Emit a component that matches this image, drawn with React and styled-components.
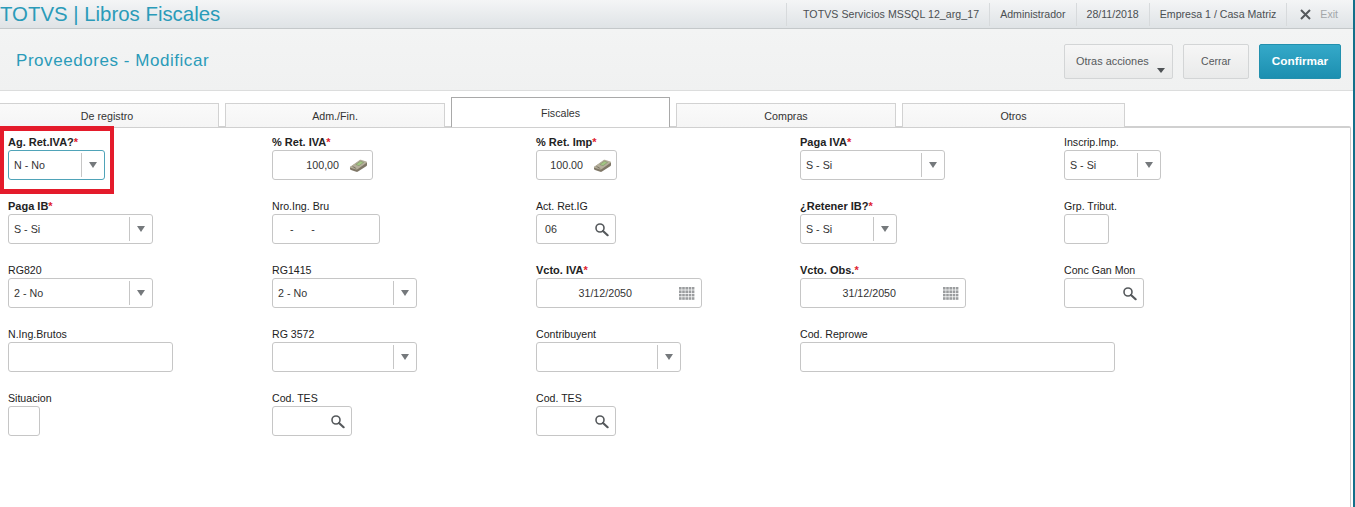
import React from 'react';
import styled, { createGlobalStyle } from 'styled-components';

const Global = createGlobalStyle`
  html, body { margin: 0; padding: 0; background: #fff; }
  body { font-family: "Liberation Sans", Arial, sans-serif; }
`;

const Page = styled.div`
  position: relative;
  width: 1355px;
  height: 507px;
  overflow: hidden;
  box-sizing: border-box;
  border-right: 2px solid #13708a;
  display: flex;
  flex-direction: column;
  background: #fff;
`;

const TopBar = styled.header`
  height: 28px;
  flex: none;
  display: flex;
  align-items: center;
  justify-content: space-between;
  background: linear-gradient(#f4f5f6, #dfe3e6);
  border-bottom: 1px solid #c4c8ca;
`;

const Brand = styled.div`
  font-size: 20.4px;
  color: #2a9bb9;
  white-space: nowrap;
`;

const Session = styled.div`
  display: flex;
  height: 100%;
  align-items: center;
  margin-right: 2px;
`;

const SessionItem = styled.div`
  display: flex;
  align-items: center;
  gap: 9px;
  height: 23px;
  padding: 0 ${p => p.$pad || 10}px 0 ${p => p.$padLeft || p.$pad || 10}px;
  border-left: 1px solid #d7dadc;
  font-size: 10.6px;
  letter-spacing: ${p => p.$ls || 0}px;
  color: ${p => p.$muted ? '#a3a7a9' : '#4b4f52'};
  white-space: nowrap;
`;

const SubBar = styled.div`
  height: 62px;
  flex: none;
  display: flex;
  align-items: center;
  justify-content: space-between;
  box-sizing: border-box;
  padding: 0 12px 0 16px;
  background: linear-gradient(#f3f4f4, #f0f1f1);
  border-bottom: 1px solid #dcdddd;
`;

const Title = styled.h1`
  margin: 2px 0 0;
  font-size: 17px;
  font-weight: 400;
  letter-spacing: 0.55px;
  color: #2a9bb9;
`;

const Actions = styled.div`
  display: flex;
  align-items: center;
  gap: 10px;
  padding-top: 3px;
`;

const Button = styled.button`
  position: relative;
  width: ${p => p.$w}px;
  height: 35px;
  box-sizing: border-box;
  font-family: inherit;
  border-radius: 2px;
  border: 1px solid ${p => p.$primary ? '#2290ae' : '#d3d5d6'};
  background: ${p => p.$primary ? 'linear-gradient(#35a9c9, #1c8fb0)' : 'linear-gradient(#f6f6f6, #e9eaea)'};
  color: ${p => p.$primary ? '#fff' : '#55595b'};
  font-weight: ${p => p.$primary ? 700 : 400};
  font-size: ${p => p.$primary ? 11.8 : p.$left ? 10.9 : 10.5}px;
  text-align: ${p => p.$left ? 'left' : 'center'};
  padding: 0 0 0 ${p => p.$left ? 11 : 0}px;
`;

const Caret = styled.span`
  position: absolute;
  right: 7px;
  bottom: 5px;
  border-left: 4.5px solid transparent;
  border-right: 4.5px solid transparent;
  border-top: 5px solid #4e5255;
`;

const Tabs = styled.nav`
  display: flex;
  align-items: flex-end;
  gap: 6px;
  height: 36px;
  flex: none;
  margin-left: -5px;
  position: relative;
  z-index: 1;
`;

const Tab = styled.div`
  width: ${p => p.$w}px;
  height: ${p => p.$active ? 30 : 24}px;
  box-sizing: border-box;
  display: flex;
  align-items: center;
  justify-content: center;
  font-size: 10.7px;
  color: #333;
  background: ${p => p.$active ? '#fff' : 'linear-gradient(#fafafa, #f5f5f5)'};
  border: 1px solid ${p => p.$active ? '#a9a9a9' : '#d2d2d2'};
  border-bottom: 0;
`;

const Panel = styled.main`
  flex: 1;
  margin: -1px 2px 0 -2px;
  border: 1px solid #c9c9c9;
  border-top-width: 2px;
  border-top-color: #d0d0d0;
  border-bottom: 0;
  border-radius: 2px 2px 0 0;
  box-sizing: border-box;
  padding: 7px 0 0 9px;
  display: grid;
  grid-template-columns: repeat(5, 264px);
  grid-auto-rows: 64px;
  align-content: start;
`;

const Cell = styled.div`
  display: flex;
  flex-direction: column;
  align-items: flex-start;
`;

const Label = styled.label`
  height: 15px;
  line-height: 15px;
  font-size: ${p => p.$req ? 11 : 10.6}px;
  font-weight: ${p => p.$req ? 700 : 400};
  color: #222;
  white-space: nowrap;
  em { font-style: normal; color: #e0222f; }
`;

const Box = styled.div`
  width: ${p => p.$w}px;
  height: 30px;
  box-sizing: border-box;
  display: flex;
  align-items: center;
  border: 1px solid ${p => p.$focus ? '#4fa3b8' : '#c6c6c6'};
  border-radius: 3px;
  background: #fff;
  font-size: 10.7px;
  color: #333;
`;

const Value = styled.span`
  flex: 1;
  padding-left: 5px;
  padding-right: ${p => p.$right || 0}px;
  text-align: ${p => p.$align || 'left'};
  white-space: pre;
`;

const ArrowZone = styled.span`
  width: 22px;
  height: 24px;
  flex: none;
  border-left: 1px solid #c6c6c6;
  display: flex;
  align-items: center;
  justify-content: center;
  &::after {
    content: '';
    border-left: 4.5px solid transparent;
    border-right: 4.5px solid transparent;
    border-top: 6px solid #75797c;
  }
`;

const IconSlot = styled.span`
  display: flex;
  flex: none;
  margin-right: ${p => p.$mr || 6}px;
`;

const Highlight = styled.div`
  position: absolute;
  left: 0;
  top: 126px;
  width: 114px;
  height: 68px;
  box-sizing: border-box;
  border: solid #e41b2b;
  border-width: 5px 4px;
  pointer-events: none;
  z-index: 2;
`;

const SearchIcon = () => (
  <svg width="15" height="15" viewBox="0 0 15 15" fill="none">
    <circle cx="6" cy="6" r="4" stroke="#55595c" strokeWidth="1.6" />
    <path d="M9 9l4.6 4.2" stroke="#55595c" strokeWidth="2.2" strokeLinecap="round" />
  </svg>
);

const MoneyIcon = () => (
  <svg width="19" height="15" viewBox="0 0 19 15">
    <path d="M1 9L11 2.5l7 2v2.5c0 .6-.3 1-.8 1.3L9 13.6c-.6.4-1.2.4-1.8.2L2 12c-.7-.2-1-.7-1-1.3z" fill="#7f7767" />
    <path d="M1 9l9.6-7c.4-.3.9-.4 1.3-.2L17.400 3.600c.6.2.7.7.2 1.100L8.500 11.300c-.5.300-1 .400-1.500.200L1.300 9.800C.8 9.600.700 9.300 1 9z" fill="#b5af9b" />
    <path d="M6.800 6.500l4.600-3.300 3.200 1.100-4.600 3.400z" fill="#a3c684" stroke="#6d7f58" strokeWidth=".4" />
    <path d="M3.500 8.600l2.300.9M5.200 9.600l2 .8" stroke="#6f6a5a" strokeWidth=".8" />
  </svg>
);

const CalendarIcon = () => (
  <svg width="16" height="13" viewBox="0 0 16 13" fill="#9b9d9f">
    {[0, 3.4, 6.8, 10.2].flatMap(y =>
      [0, 3.2, 6.4, 9.6, 12.8].map(x => (
        <rect key={`${x}-${y}`} x={x} y={y} width="2.6" height="2.6" />
      ))
    )}
  </svg>
);

const CloseIcon = () => (
  <svg width="11" height="11" viewBox="0 0 11 11">
    <path d="M1 1l9 9M10 1l-9 9" stroke="#55595c" strokeWidth="2" />
  </svg>
);

const Select = ({ w, value, focus }) => (
  <Box $w={w} $focus={focus}>
    <Value>{value}</Value>
    <ArrowZone />
  </Box>
);

const Search = ({ w, value }) => (
  <Box $w={w}>
    <Value>{value}</Value>
    <IconSlot $mr={6}><SearchIcon /></IconSlot>
  </Box>
);

const Money = ({ w, value }) => (
  <Box $w={w}>
    <Value $align="right" $right={10}>{value}</Value>
    <IconSlot $mr={4}><MoneyIcon /></IconSlot>
  </Box>
);

const DateField = ({ w, value }) => (
  <Box $w={w}>
    <Value $align="right" $right={47}>{value}</Value>
    <IconSlot $mr={6}><CalendarIcon /></IconSlot>
  </Box>
);

const Field = ({ label, req, children }) => (
  <Cell>
    <Label $req={req}>{label}{req && <em>*</em>}</Label>
    {children}
  </Cell>
);

export default function App() {
  return (
    <>
      <Global />
      <Page>
        <TopBar>
          <Brand>TOTVS | Libros Fiscales</Brand>
          <Session>
            <SessionItem $padLeft={16} $ls={0.06}>TOTVS Servicios MSSQL 12_arg_17</SessionItem>
            <SessionItem>Administrador</SessionItem>
            <SessionItem>28/11/2018</SessionItem>
            <SessionItem>Empresa 1 / Casa Matriz</SessionItem>
            <SessionItem $muted $pad={13}><CloseIcon />Exit</SessionItem>
          </Session>
        </TopBar>
        <SubBar>
          <Title>Proveedores - Modificar</Title>
          <Actions>
            <Button $w={109} $left>Otras acciones<Caret /></Button>
            <Button $w={66}>Cerrar</Button>
            <Button $w={82} $primary>Confirmar</Button>
          </Actions>
        </SubBar>
        <Tabs>
          <Tab $w={224}>De registro</Tab>
          <Tab $w={220}>Adm./Fin.</Tab>
          <Tab $w={219} $active>Fiscales</Tab>
          <Tab $w={220}>Compras</Tab>
          <Tab $w={223}>Otros</Tab>
        </Tabs>
        <Panel>
          <Field label="Ag. Ret.IVA?" req><Select w={97} value="N - No" focus /></Field>
          <Field label="% Ret. IVA" req><Money w={101} value="100,00" /></Field>
          <Field label="% Ret. Imp" req><Money w={81} value="100.00" /></Field>
          <Field label="Paga IVA" req><Select w={145} value="S - Si" /></Field>
          <Field label="Inscrip.Imp."><Select w={97} value="S - Si" /></Field>

          <Field label="Paga IB" req><Select w={145} value="S - Si" /></Field>
          <Field label="Nro.Ing. Bru"><Box $w={108}><Value>{'    -      -'}</Value></Box></Field>
          <Field label="Act. Ret.IG"><Search w={80} value=" 06" /></Field>
          <Field label="¿Retener IB?" req><Select w={97} value="S - Si" /></Field>
          <Field label="Grp. Tribut."><Box $w={45} /></Field>

          <Field label="RG820"><Select w={145} value="2 - No" /></Field>
          <Field label="RG1415"><Select w={145} value="2 - No" /></Field>
          <Field label="Vcto. IVA" req><DateField w={166} value="31/12/2050" /></Field>
          <Field label="Vcto. Obs." req><DateField w={166} value="31/12/2050" /></Field>
          <Field label="Conc Gan Mon"><Search w={80} /></Field>

          <Field label="N.Ing.Brutos"><Box $w={165} /></Field>
          <Field label="RG 3572"><Select w={145} /></Field>
          <Field label="Contribuyent"><Select w={145} /></Field>
          <Field label="Cod. Reprowe"><Box $w={315} /></Field>
          <span />

          <Field label="Situacion"><Box $w={32} /></Field>
          <Field label="Cod. TES"><Search w={80} /></Field>
          <Field label="Cod. TES"><Search w={80} /></Field>
        </Panel>
        <Highlight />
      </Page>
    </>
  );
}
